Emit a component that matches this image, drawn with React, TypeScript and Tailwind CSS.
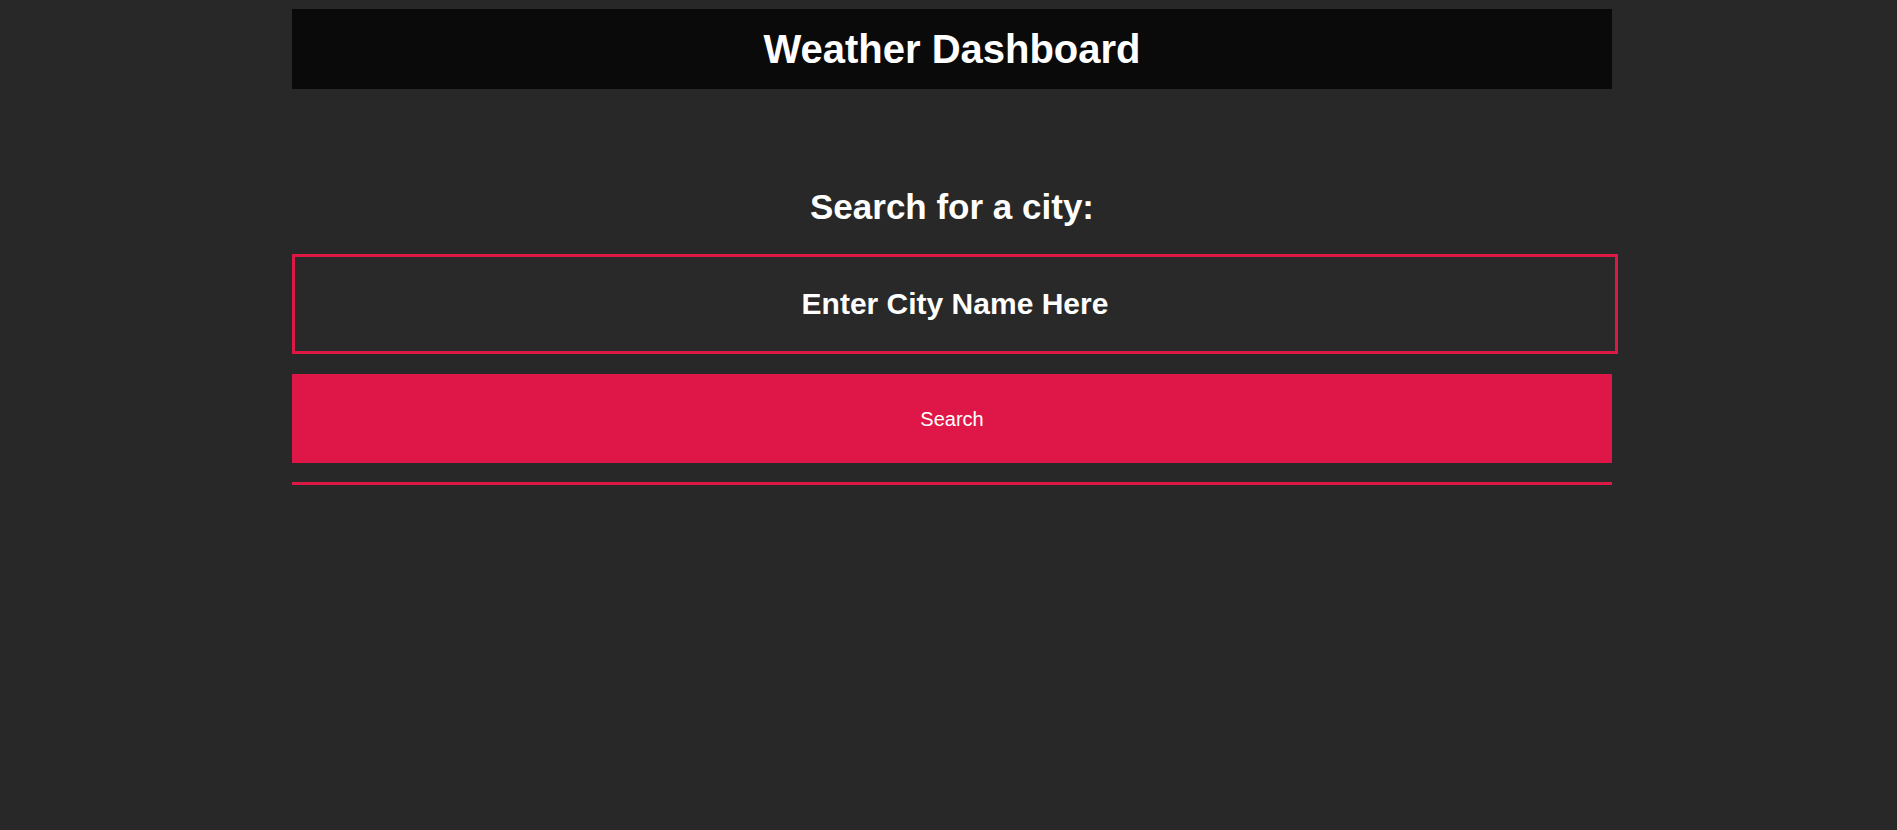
import React, { useState } from "react";

const App: React.FC = () => {
  const [city, setCity] = useState("");

  return (
    <div
      className="min-h-screen bg-[#282828] text-white"
      style={{ fontFamily: '"Liberation Sans", Arial, sans-serif' }}
    >
      <div className="ml-[292px] w-[1320px] pt-[9px]">
        <header className="flex h-[80px] items-center justify-center bg-[#0a0a0a]">
          <h1 className="text-[40px] font-bold leading-none">Weather Dashboard</h1>
        </header>

        <section className="mt-[98px] flex flex-col">
          <h2 className="text-center text-[35px] font-bold leading-[40px]">
            Search for a city:
          </h2>
          <input
            type="text"
            value={city}
            onChange={(e) => setCity(e.target.value)}
            placeholder="Enter City Name Here"
            className="mt-[27px] box-content h-[94px] w-[1320px] border-[3px] border-[#dc1845] bg-[#292929] text-center text-[30px] font-bold text-white outline-none placeholder:text-white"
          />
          <button
            type="button"
            className="mt-[20px] h-[89px] w-full bg-[#df1748] text-[20px] text-white"
          >
            Search
          </button>
          <div className="mt-[19px] h-[3px] w-full bg-[#dc1845]" />
        </section>
      </div>
    </div>
  );
};

export default App;
